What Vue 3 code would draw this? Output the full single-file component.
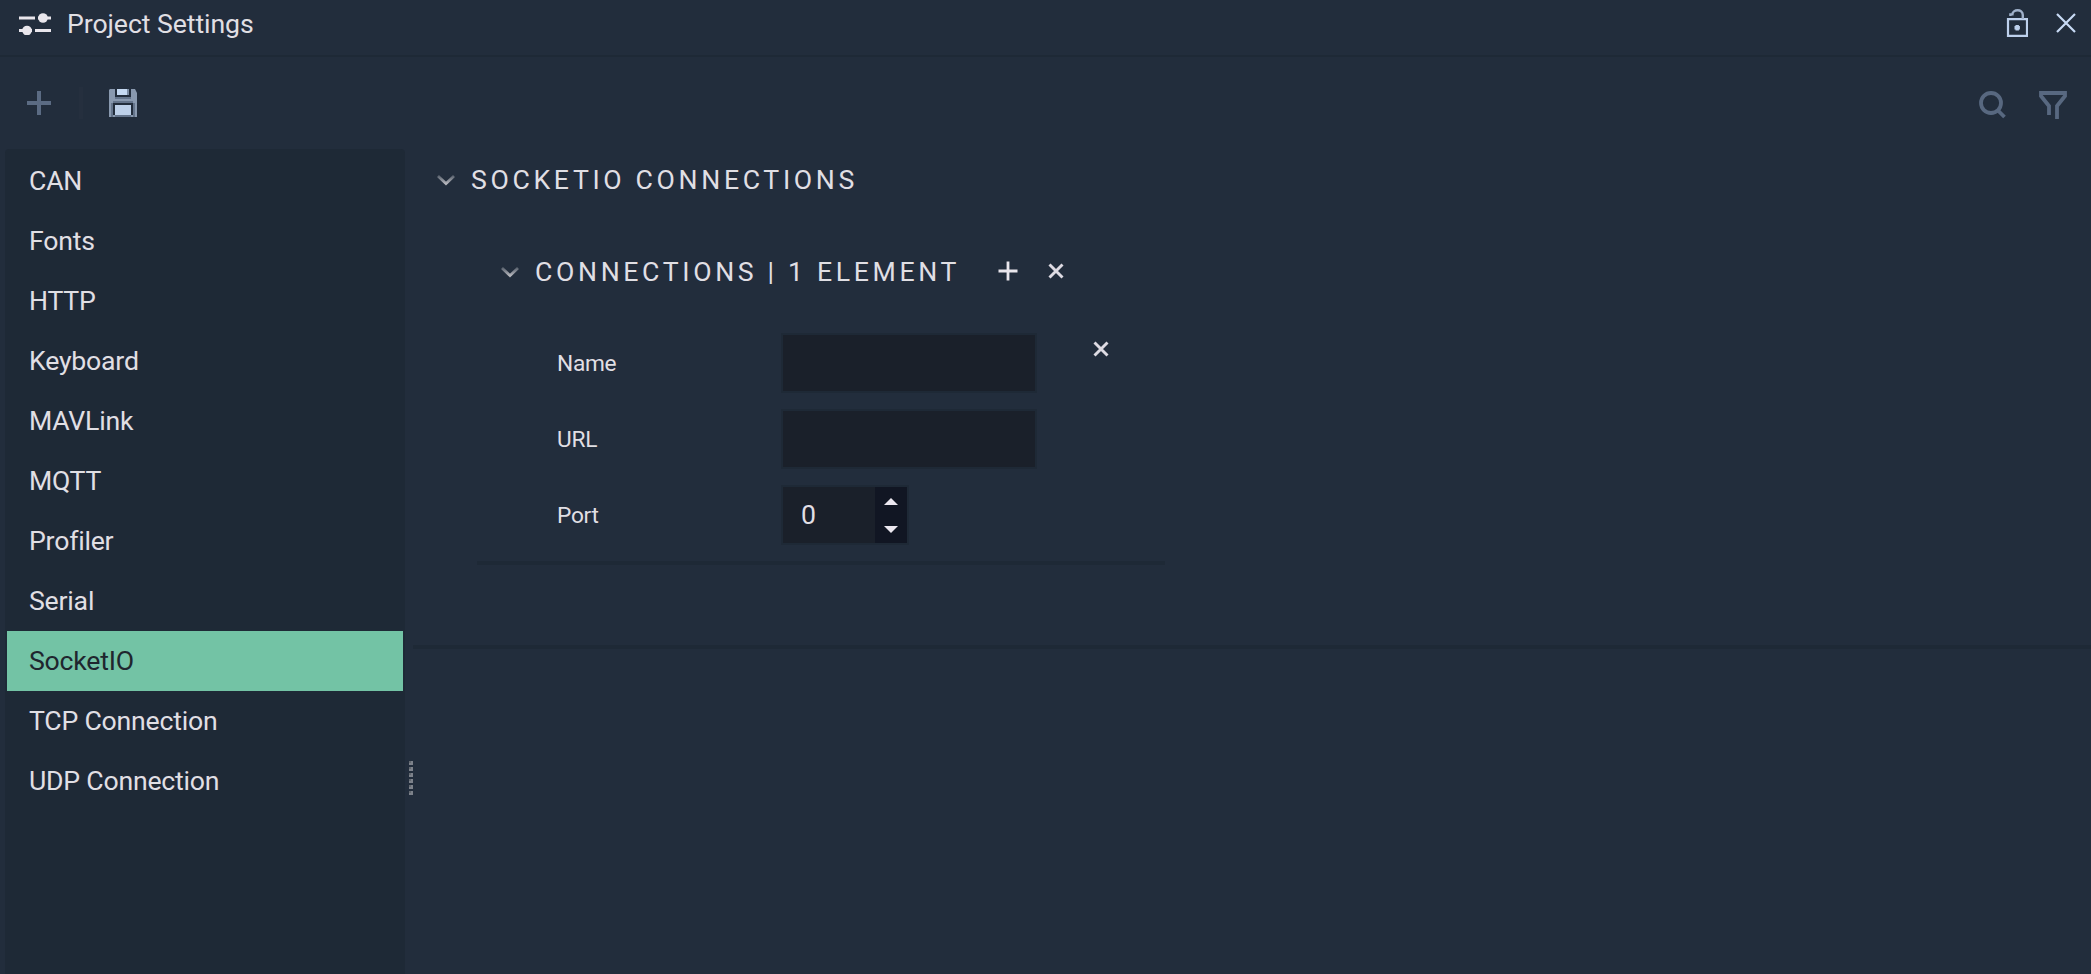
<script setup>
import { ref } from 'vue'

const categories = ['CAN', 'Fonts', 'HTTP', 'Keyboard', 'MAVLink', 'MQTT', 'Profiler', 'Serial', 'SocketIO', 'TCP Connection', 'UDP Connection']
const selected = ref('SocketIO')
const name = ref('')
const url = ref('')
const port = ref(0)
</script>

<template>
  <div class="window">
    <header class="titlebar">
      <svg class="sliders" width="32" height="22" viewBox="0 0 32 22">
        <path d="M0 5h16M19 5h13M0 17.5h13M16 17.5h16" stroke="#e9e6ec" stroke-width="3" />
        <circle cx="24" cy="5" r="4.8" fill="#e9e6ec" />
        <circle cx="8" cy="17.5" r="4.8" fill="#e9e6ec" />
      </svg>
      <h1 class="title">Project Settings</h1>
      <svg class="lock" width="22" height="28" viewBox="0 0 22 28" fill="none" stroke="#bdd0ec">
        <path d="M2 10.2h19v16.6H2z" stroke-width="2.2" />
        <path d="M4.4 7V5.4h2C6.4 .2 16.8-.6 16.8 6v4" stroke-width="2.4" stroke="#9fb0c9" />
        <path d="M8.5 18.7h5.4M11.2 16v5.4" stroke-width="3.4" />
      </svg>
      <svg class="close" width="20" height="20" viewBox="0 0 20 20" fill="none" stroke="#c8daf5" stroke-width="2.2">
        <path d="M1 1l18 18M19 1L1 19" />
      </svg>
    </header>

    <div class="toolbar">
      <svg class="add" width="24" height="24" viewBox="0 0 24 24">
        <path d="M12 0v24M0 12h24" stroke="#5b6b83" stroke-width="4" />
      </svg>
      <span class="divider"></span>
      <svg class="save" width="28" height="28" viewBox="0 0 28 28">
        <path d="M1 0h25l2 4v24H0V1z" fill="#8999af" />
        <path d="M6 0h16v8H6zM4 14h20v12h-20z" fill="#222d3c" />
        <path d="M6 8h16v2H6zM4 12h20v2H4zM2 14h2v14H2zM24 14h2v14h-2zM6 26h16v2H6z" fill="#64748b" />
        <path d="M8 0h10v6H8z" fill="#c5d9f2" />
        <path d="M18 0h2v6h-2z" fill="#7c8da5" />
        <path d="M6 16h16v10H6z" fill="#bdd0e9" />
      </svg>
      <svg class="search" width="28" height="28" viewBox="0 0 28 28" fill="none" stroke="#586880" stroke-width="3.8">
        <circle cx="12" cy="12" r="10" />
        <path d="M18.5 19l7 7" />
      </svg>
      <svg class="filter" width="28" height="28" viewBox="0 0 28 28" fill="none" stroke="#586880">
        <path d="M10 24V15L2 5V2h24v3l-8 10v13" stroke-width="3.8" />
      </svg>
    </div>

    <div class="body">
      <nav class="sidebar">
        <div v-for="c in categories" :key="c" class="item" :class="{ active: c === selected }" @click="selected = c">{{ c }}</div>
      </nav>
      <div class="splitter"><i v-for="n in 6" :key="n"></i></div>
      <main class="content">
        <section class="group">
          <div class="heading">
            <svg class="chevron" width="18" height="12" viewBox="0 0 18 12">
              <defs>
                <linearGradient id="fade" x1="0" y1="0" x2="0" y2="1">
                  <stop offset="0" stop-color="#5d6571" />
                  <stop offset="1" stop-color="#b4b5bb" />
                </linearGradient>
              </defs>
              <path d="M1 2l8 7.5L17 2" />
            </svg>
            <h2>SOCKETIO CONNECTIONS</h2>
          </div>
          <div class="sub">
            <div class="heading">
              <svg class="chevron" width="18" height="12" viewBox="0 0 18 12"><path d="M1 2l8 7.5L17 2" /></svg>
              <h2>CONNECTIONS | 1 ELEMENT</h2>
              <svg class="plus" width="20" height="20" viewBox="0 0 20 20"><path d="M10 .5v19M.5 10h19" stroke="#e9e6ec" stroke-width="2.8" /></svg>
              <svg class="cross" width="16" height="16" viewBox="0 0 16 16"><path d="M1.5 1.5l13 13M14.5 1.5l-13 13" /></svg>
            </div>
            <div class="element">
              <div class="fields">
                <label>Name</label>
                <input v-model="name" class="text" type="text">
                <label>URL</label>
                <input v-model="url" class="text" type="text">
                <label>Port</label>
                <div class="spin">
                  <span class="value">{{ port }}</span>
                  <span class="steps">
                    <svg width="14" height="7" viewBox="0 0 14 7" @click="port++"><path d="M7 0l7 7H0z" fill="#ece8f0" /></svg>
                    <svg width="14" height="7" viewBox="0 0 14 7" @click="port--"><path d="M7 7l7-7H0z" fill="#ece8f0" /></svg>
                  </span>
                </div>
              </div>
              <svg class="cross" width="16" height="16" viewBox="0 0 16 16"><path d="M1.5 1.5l13 13M14.5 1.5l-13 13" /></svg>
            </div>
          </div>
        </section>
      </main>
    </div>
  </div>
</template>

<style>
body {
  margin: 0;
  background: #222d3c;
}
</style>

<style scoped>
.window {
  box-sizing: border-box;
  height: 974px;
  display: flex;
  flex-direction: column;
  overflow: hidden;
  background: #222d3c;
  color: #e0dfe4;
  font-family: Roboto, "Liberation Sans", sans-serif;
  font-size: 26.67px;
}
svg {
  display: block;
  flex: none;
}
.titlebar {
  box-sizing: border-box;
  height: 57px;
  padding: 0 15px 10px 19px;
  display: flex;
  align-items: center;
  border-bottom: 2px solid #1e2936;
}
.sliders {
  margin-top: 2px;
}
.title {
  margin: 2px auto 0 16px;
  font-size: 26.67px;
  font-weight: 400;
  letter-spacing: -0.08px;
}
.lock {
  margin: 1px 28px 0 0;
}
.close {
  margin-top: 1px;
}
.toolbar {
  height: 92px;
  padding: 0 24px 0 27px;
  display: flex;
  align-items: center;
}
.divider {
  width: 4px;
  height: 32px;
  margin: 0 26px 0 28px;
  background: #252f3e;
}
.search {
  margin-left: auto;
  margin-top: 4px;
}
.filter {
  margin-left: 32px;
  margin-top: 4px;
}
.body {
  flex: 1;
  display: flex;
}
.sidebar {
  box-sizing: border-box;
  width: 400px;
  margin-left: 5px;
  padding: 2px;
  border-radius: 4px 4px 0 0;
  background: #1e2936;
}
.item {
  height: 60px;
  padding-left: 22px;
  line-height: 60px;
  letter-spacing: -0.22px;
}
.item.active {
  background: #73c3a5;
  color: #1f262e;
}
.splitter {
  width: 8px;
  padding: 612px 0 0 4px;
  box-sizing: border-box;
  display: flex;
  flex-direction: column;
  gap: 2px;
}
.splitter i {
  width: 4px;
  height: 4px;
  background: linear-gradient(#62686f, #62686f) 0 0 / 2px 2px no-repeat #7c818a;
}
.content {
  flex: 1;
}
.group {
  box-sizing: border-box;
  height: 500px;
  border-bottom: 4px solid #1e2936;
}
.heading {
  height: 60px;
  padding-left: 24px;
  display: flex;
  align-items: center;
}
.chevron {
  margin-top: 2px;
  fill: none;
  stroke: url(#fade);
  stroke-width: 2.8;
}
h2 {
  margin: 1px 0 0 16px;
  font-size: 26.67px;
  font-weight: 400;
  letter-spacing: 3.65px;
  white-space: nowrap;
}
.sub {
  box-sizing: border-box;
  width: 688px;
  height: 324px;
  margin: 32px 0 0 64px;
  border-bottom: 4px solid #1e2936;
}
.plus {
  margin-left: 38px;
}
.cross {
  fill: none;
  stroke: #dedbe3;
  stroke-width: 2.9;
}
.heading .cross {
  margin-left: 30px;
}
.element {
  padding: 32px 0 0 80px;
  display: flex;
}
.element .cross {
  margin: 8px 0 0 56px;
}
.fields {
  display: grid;
  grid-template-columns: 224px 256px;
  grid-auto-rows: 60px;
  row-gap: 16px;
  align-items: center;
}
label {
  font-size: 22.67px;
  letter-spacing: -0.25px;
}
.text,
.spin {
  box-sizing: border-box;
  height: 60px;
  border: 2px solid #1e2936;
  background: #1a202a;
}
.text {
  width: 256px;
  padding: 0 18px;
  color: inherit;
  font: inherit;
  outline: none;
}
.spin {
  width: 128px;
  display: flex;
}
.value {
  flex: 1;
  padding-left: 18px;
  line-height: 56px;
}
.steps {
  width: 32px;
  display: flex;
  flex-direction: column;
  align-items: center;
  justify-content: center;
  gap: 21px;
  background: #111623;
}
</style>
